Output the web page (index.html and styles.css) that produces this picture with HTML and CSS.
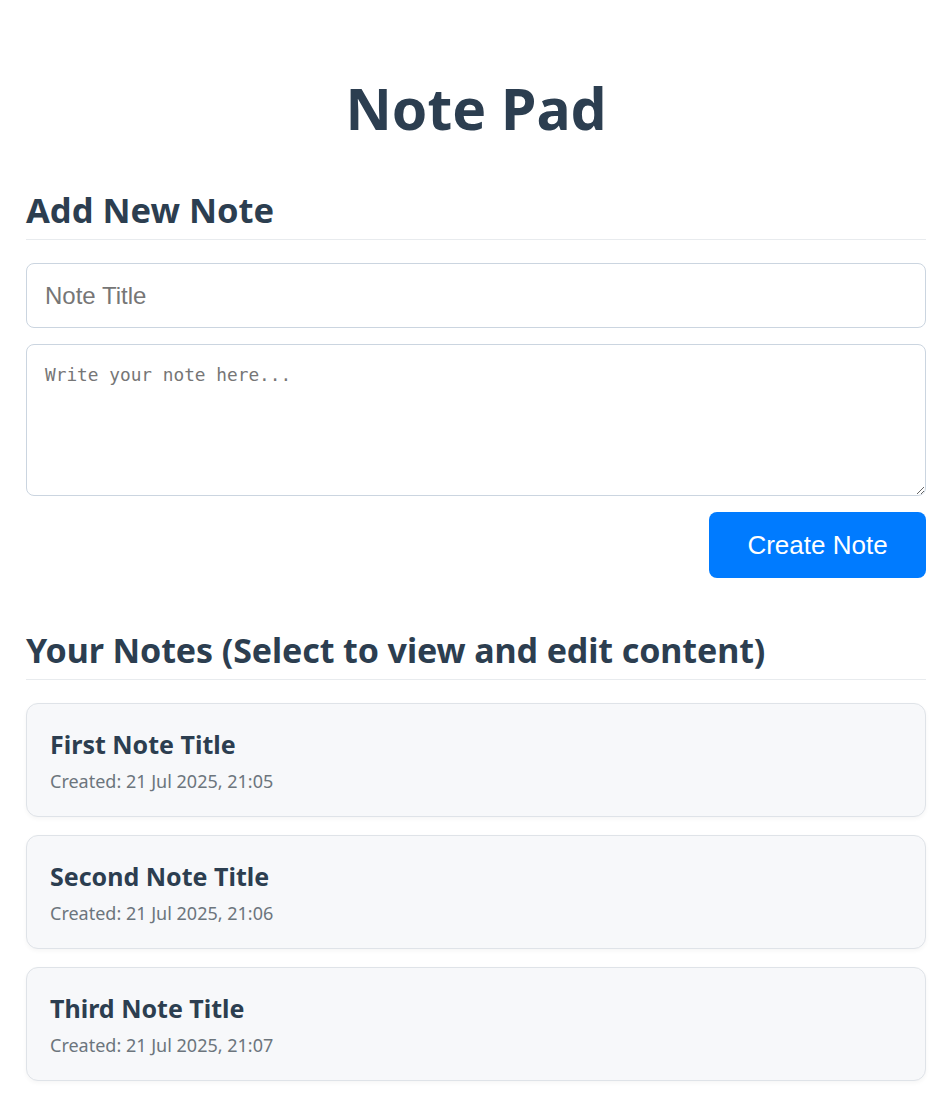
FILE: index.html
```html
<!DOCTYPE html>
<html lang="en">
<head>
<meta charset="utf-8">
<title>Note Pad</title>
<link rel="stylesheet" href="styles.css">
</head>
<body>
<main class="container">
  <h1 class="app-title">Note Pad</h1>

  <section class="add-section">
    <h2 class="section-title">Add New Note</h2>
    <form class="note-form">
      <input class="title-input" type="text" placeholder="Note Title">
      <textarea class="content-input" placeholder="Write your note here..."></textarea>
      <div class="form-actions">
        <button type="button" class="create-btn">Create Note</button>
      </div>
    </form>
  </section>

  <section class="notes-section">
    <h2 class="section-title">Your Notes (Select to view and edit content)</h2>
    <ul class="note-list">
      <li class="note-card">
        <h3 class="note-title">First Note Title</h3>
        <p class="note-meta">Created: 21 Jul 2025, 21:05</p>
      </li>
      <li class="note-card">
        <h3 class="note-title">Second Note Title</h3>
        <p class="note-meta">Created: 21 Jul 2025, 21:06</p>
      </li>
      <li class="note-card">
        <h3 class="note-title">Third Note Title</h3>
        <p class="note-meta">Created: 21 Jul 2025, 21:07</p>
      </li>
    </ul>
  </section>
</main>
</body>
</html>
```

FILE: styles.css
```css
* { box-sizing: border-box; }

html, body {
  margin: 0;
  background: #ffffff;
}

body {
  font-family: "Noto Sans", "Open Sans", sans-serif;
  color: #2c3e50;
}

.container {
  max-width: 900px;
  margin: 0 auto;
  padding: 72px 0 20px;
}

.app-title {
  margin: 0 0 44px;
  text-align: center;
  font-size: 57px;
  line-height: 72px;
  font-weight: 700;
  color: #2c3e50;
}

.section-title {
  margin: 0 0 23px;
  padding-bottom: 7px;
  border-bottom: 1px solid #e8ebee;
  font-size: 34.5px;
  line-height: 44px;
  font-weight: 700;
  color: #2c3e50;
}

.notes-section .section-title {
  font-size: 34px;
  letter-spacing: -0.1px;
}

.note-form {
  display: flex;
  flex-direction: column;
  gap: 16px;
}

.title-input,
.content-input {
  display: block;
  width: 100%;
  border: 1px solid #cbd5e0;
  border-radius: 8px;
  background: #fff;
  color: #2c3e50;
  margin: 0;
}

.title-input {
  height: 65px;
  padding: 0 18px;
  font-family: "Liberation Sans", Arial, sans-serif;
  font-size: 24px;
}

.title-input::placeholder { color: #767676; }

.content-input {
  height: 152px;
  padding: 19px 18px;
  font-family: "DejaVu Sans Mono", "Liberation Mono", monospace;
  font-size: 17.8px;
  line-height: 22px;
  resize: vertical;
}

.content-input::placeholder { color: #767676; }

.form-actions {
  display: flex;
  justify-content: flex-end;
}

.create-btn {
  width: 217px;
  height: 66px;
  border: 0;
  border-radius: 8px;
  background: #007bff;
  color: #fff;
  font-family: "Liberation Sans", Arial, sans-serif;
  font-size: 26px;
  cursor: pointer;
}

.notes-section {
  margin-top: 50px;
}

.note-list {
  list-style: none;
  margin: 0;
  padding: 0;
  display: flex;
  flex-direction: column;
  gap: 18px;
}

.note-card {
  height: 114px;
  padding: 24px 23px 0;
  background: #f7f8fa;
  border: 1px solid #dfe3e8;
  border-radius: 12px;
  box-shadow: 0 2px 4px rgba(0, 0, 0, 0.04);
}

.note-title {
  margin: 0;
  font-size: 25px;
  line-height: 32px;
  font-weight: 700;
  color: #2c3e50;
}

.note-meta {
  margin: 8px 0 0;
  font-size: 18px;
  line-height: 26px;
  color: #6c757d;
}
```
